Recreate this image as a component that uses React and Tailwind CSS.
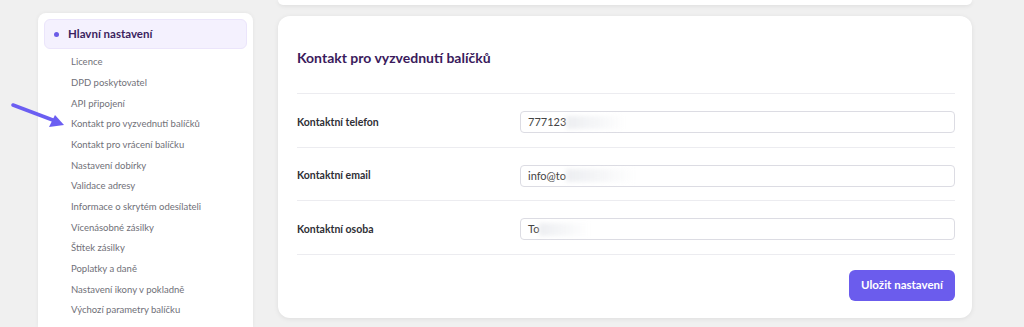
import React from 'react';

const menu = [
  'Licence',
  'DPD poskytovatel',
  'API připojení',
  'Kontakt pro vyzvednutí balíčků',
  'Kontakt pro vrácení balíčku',
  'Nastavení dobírky',
  'Validace adresy',
  'Informace o skrytém odesílateli',
  'Vícenásobné zásilky',
  'Štítek zásilky',
  'Poplatky a daně',
  'Nastavení ikony v pokladně',
  'Výchozí parametry balíčku',
];

const fields = [
  { label: 'Kontaktní telefon', value: '777123', blur: 'w-[60px]' },
  { label: 'Kontaktní email', value: 'info@to', blur: 'w-[70px]' },
  { label: 'Kontaktní osoba', value: 'To', blur: 'w-[50px]' },
];

// Rozmazaná část hodnoty (skryté údaje)
function Blur({ w }) {
  return (
    <span className={`inline-block h-[13px] ${w} bg-gradient-to-r from-gray-200/70 via-gray-100/80 to-transparent blur-[2px]`} />
  );
}

export default function App() {
  return (
    <div
      className="relative flex h-[327px] overflow-hidden bg-[#f0f0f0] text-[#333]"
      style={{ fontFamily: 'Lato, "Noto Sans", sans-serif' }}
    >
      {/* Sidebar */}
      <aside className="ml-[38px] mt-[13px] w-[215px] shrink-0 rounded-t-lg bg-white px-[6px] pt-[6px] shadow-[0_0_4px_rgba(0,0,0,0.06)]">
        <div className="flex h-[30px] items-center rounded-md border border-[#ebe5fb] bg-[#f4f1fe] pl-[9px]">
          <span className="h-[5px] w-[5px] rounded-full bg-[#6b5ce7]" />
          <span className="ml-[9px] text-[11.5px] font-bold text-[#3b1f5e]">Hlavní nastavení</span>
        </div>
        <ul className="mt-[3px] pl-[27px]">
          {menu.map((item) => (
            <li key={item} className="flex h-[20.7px] items-center text-[9.5px] text-[#707078]">
              {item}
            </li>
          ))}
        </ul>
      </aside>

      {/* Main */}
      <main className="ml-[25px] w-[694px] shrink-0">
        <div className="h-[5px] rounded-b-xl bg-white shadow-[0_1px_4px_rgba(0,0,0,0.08)]" />
        <section className="mt-[11px] rounded-xl bg-white px-[17px] pb-[17px] pl-[19px] shadow-[0_1px_5px_rgba(0,0,0,0.08)]">
          <h2 className="flex h-[78px] items-center border-b border-[#ececf0] pt-[6px] text-[14px] font-bold text-[#3a1a5c]">
            Kontakt pro vyzvednutí balíčků
          </h2>
          {fields.map((f) => (
            <div key={f.label} className="flex h-[53.5px] items-center border-b border-[#ececf0] pt-[4px]">
              <label className="w-[223px] shrink-0 pt-[1px] text-[10.5px] font-bold text-[#2f2f35]">{f.label}</label>
              <div className="flex h-[22px] flex-1 items-center rounded-[4px] border border-[#dcdce3] bg-white pl-[7px] text-[11px] text-[#444]">
                {f.value}
                <Blur w={f.blur} />
              </div>
            </div>
          ))}
          <div className="flex justify-end pt-[15px]">
            <button className="h-[31px] w-[106px] rounded-md bg-[#6b5ced] text-[11.5px] font-bold text-white">
              Uložit nastavení
            </button>
          </div>
        </section>
      </main>

      {/* Šipka */}
      <svg className="absolute left-[10px] top-[100px]" width="60" height="32" viewBox="0 0 60 32">
        <line x1="3" y1="5" x2="48" y2="22" stroke="#6b5ef2" strokeWidth="3.5" strokeLinecap="round" />
        <polygon points="54,25 39,27 45,15" fill="#6b5ef2" />
      </svg>
    </div>
  );
}
